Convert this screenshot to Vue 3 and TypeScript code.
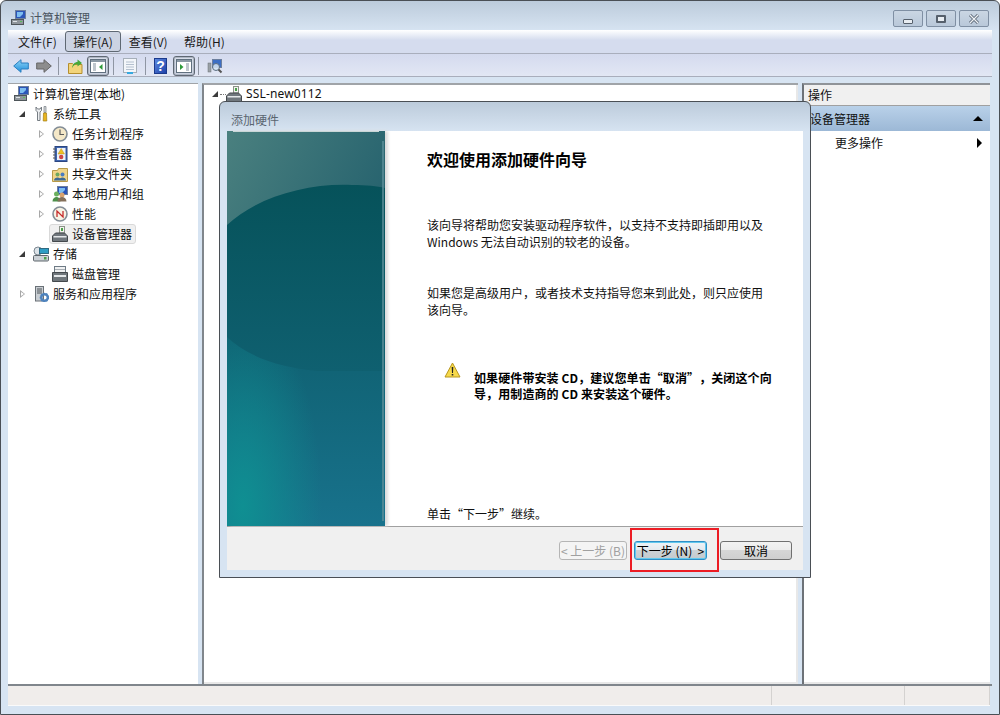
<script setup lang="ts">
interface TreeRow {
  label: string
  indent: number
  arrow?: 'open' | 'closed'
  icon: string
  selected?: boolean
}

const menus = ['文件(F)', '操作(A)', '查看(V)', '帮助(H)']

const rows: TreeRow[] = [
  { label: '计算机管理(本地)', indent: 0, icon: 'pc' },
  { label: '系统工具', indent: 1, arrow: 'open', icon: 'tools' },
  { label: '任务计划程序', indent: 2, arrow: 'closed', icon: 'clock' },
  { label: '事件查看器', indent: 2, arrow: 'closed', icon: 'event' },
  { label: '共享文件夹', indent: 2, arrow: 'closed', icon: 'share' },
  { label: '本地用户和组', indent: 2, arrow: 'closed', icon: 'users' },
  { label: '性能', indent: 2, arrow: 'closed', icon: 'perf' },
  { label: '设备管理器', indent: 2, icon: 'device', selected: true },
  { label: '存储', indent: 1, arrow: 'open', icon: 'storage' },
  { label: '磁盘管理', indent: 2, icon: 'disk' },
  { label: '服务和应用程序', indent: 1, arrow: 'closed', icon: 'service' },
]
</script>

<template>
  <div class="win">
    <header class="titlebar">
      <svg class="ico" viewBox="0 0 16 16"><rect x="5.500" y=".5" width="10" height="8" fill="#2b55b8" stroke="#6c7f9e"/><path d="M7 2h6v2l-3 3H7z" fill="#7dbdf0"/><rect x="1.500" y="9.500" width="12" height="5" fill="#8f969c" stroke="#4e5559"/><rect x="3" y="11" width="4" height="1" fill="#dfe3e6"/><rect x="10" y="11" width="2" height="1" fill="#58c058"/></svg>
      <span class="title-text">计算机管理</span>
      <div class="caption">
        <span class="cap-btn"><i class="cap-min"></i></span>
        <span class="cap-btn"><i class="cap-max"></i></span>
        <span class="cap-btn">
          <svg viewBox="0 0 12 10" width="12" height="10"><path d="M2 1l8 8M10 1l-8 8" stroke="#5a6675" stroke-width="3" fill="none"/><path d="M2 1l8 8M10 1l-8 8" stroke="#f0f3f6" stroke-width="1.200" fill="none"/></svg>
        </span>
      </div>
    </header>

    <nav class="menubar">
      <span v-for="m in menus" :key="m" class="menu" :class="{ 'menu-on': m === '操作(A)' }">{{ m }}</span>
    </nav>

    <div class="toolbar">
      <svg class="t-back" width="16" height="14" viewBox="0 0 16 14"><defs><linearGradient id="backFill" x1="0" y1="0" x2="0" y2="1"><stop offset="0" stop-color="#8fd4f6"/><stop offset="1" stop-color="#1f8fdc"/></linearGradient></defs><path d="M.7 7L8 .7V4h7.300v6H8v3.300z" fill="url(#backFill)" stroke="#2a7fc0"/></svg>
      <svg class="t-fwd" width="16" height="14" viewBox="0 0 16 14"><path d="M15.300 7L8 .7V4H.7v6H8v3.300z" fill="#8d8d8d" stroke="#666"/></svg>
      <i class="sep s1"></i>
      <svg class="t-up" width="15" height="16" viewBox="0 0 15 16"><path d="M.5 5.500h4l1 1h8.500v9H.5z" fill="#f2d47a" stroke="#b58f2e"/><path d="M4 10c.5-4 3-6 5.500-6V1.500L14 5l-4.500 3.500V6C7.500 6 5.500 7.500 4 10z" fill="#46a83a"/></svg>
      <span class="tool-box b1">
        <svg width="16" height="14" viewBox="0 0 16 14"><rect x=".5" y=".5" width="15" height="13" fill="#fff" stroke="#60707f"/><rect x="1" y="1" width="14" height="2" fill="#8a98a4"/><path d="M3 5h3M3 7h3M3 9h3M3 11h3" stroke="#7f8d99"/><path d="M12.500 5v6l-3.500-3z" fill="#2f9a3a"/></svg>
      </span>
      <i class="sep s2"></i>
      <svg class="t-doc" width="14" height="16" viewBox="0 0 14 16"><rect x=".5" y=".5" width="13" height="14" fill="#f3f6fa" stroke="#a6afb9"/><path d="M3 4h8M3 6.500h8M3 9h8M3 11.500h8" stroke="#b4c0cf"/><rect x="4" y="14" width="6" height="2" fill="#36a9e0"/></svg>
      <i class="sep s3"></i>
      <svg class="t-help" width="13" height="16" viewBox="0 0 13 16"><defs><linearGradient id="helpFill" x1="0" y1="0" x2="1" y2="1"><stop offset="0" stop-color="#5f8be0"/><stop offset="1" stop-color="#1c3fa8"/></linearGradient></defs><rect x=".5" y=".5" width="12" height="15" fill="url(#helpFill)" stroke="#1b3a8c"/><text x="6.500" y="13" font-size="14" font-weight="700" text-anchor="middle" fill="#fff" font-family="Liberation Sans">?</text></svg>
      <span class="tool-box b2">
        <svg width="16" height="14" viewBox="0 0 16 14"><rect x=".5" y=".5" width="15" height="13" fill="#fff" stroke="#60707f"/><rect x="1" y="1" width="14" height="2" fill="#8a98a4"/><path d="M10 5h3M10 7h3M10 9h3M10 11h3" stroke="#7f8d99"/><path d="M4 5v6l3.500-3z" fill="#2f9a3a"/></svg>
      </span>
      <i class="sep s4"></i>
      <svg class="t-mag" width="16" height="16" viewBox="0 0 16 16"><rect x="5.500" y="1.500" width="9" height="8" fill="#3d6fc4" stroke="#6c7f9e"/><rect x="1" y="5" width="3" height="9" fill="#9aa1a6" stroke="#6a7176" stroke-width=".5"/><circle cx="9" cy="9" r="3.500" fill="#d7e6f4" fill-opacity=".85" stroke="#5a6d80"/><path d="M11.500 11.500l3 3" stroke="#555" stroke-width="2"/></svg>
    </div>

    <main class="panes">
      <aside class="tree">
        <div v-for="r in rows" :key="r.label" class="row" :class="`lvl-${r.indent}`">
          <span class="arrow" :class="r.arrow ? `arrow-${r.arrow}` : ''"></span>
          <span class="node" :class="{ 'node-on': r.selected }">
            <svg class="ico" viewBox="0 0 16 16">
              <template v-if="r.icon === 'pc'"><rect x="5.500" y=".5" width="10" height="8" fill="#2b55b8" stroke="#6c7f9e"/><path d="M7 2h6v2l-3 3H7z" fill="#7dbdf0"/><rect x="1.500" y="9.500" width="12" height="5" fill="#8f969c" stroke="#4e5559"/><rect x="3" y="11" width="4" height="1" fill="#dfe3e6"/><rect x="10" y="11" width="2" height="1" fill="#58c058"/></template>
              <template v-else-if="r.icon === 'tools'"><path d="M3 1v3.500L4.500 6v8.500h2.500V6l1.500-1.500V1L7 3H4.500z" fill="#eceef0" stroke="#767d83"/><path d="M11 .5h2v6h-2z" fill="#d5d9dc" stroke="#767d83" stroke-width=".7"/><path d="M10.500 7h3l.3 8h-3.600z" fill="#e8b420" stroke="#a37f14" stroke-width=".7"/></template>
              <template v-else-if="r.icon === 'clock'"><circle cx="8" cy="8" r="7" fill="#f4e8c8" stroke="#838d96" stroke-width="1.600"/><path d="M8 3.500V8.500h4" stroke="#5a5a5a" stroke-width="1.200" fill="none"/></template>
              <template v-else-if="r.icon === 'event'"><rect x="3" y=".5" width="12" height="15" fill="#3f66b0" stroke="#2c4680"/><rect x="5" y="2" width="8.500" height="12" fill="#eef1f6"/><path d="M9.200 2.500l3.300 5.500H6z" fill="#f0c020" stroke="#a8861a" stroke-width=".4"/><circle cx="9.200" cy="11" r="2.200" fill="#cf4646"/><path d="M1 3h2.500M1 6h2.500M1 9h2.500M1 12h2.500" stroke="#555"/></template>
              <template v-else-if="r.icon === 'share'"><path d="M.5 4.500h5l1-2h9v13H.5z" fill="#efd488" stroke="#b89a48"/><circle cx="5.500" cy="8.500" r="2" fill="#6ea85f"/><circle cx="10.500" cy="8.500" r="2" fill="#4a7cc0"/><path d="M2 14.500c0-4 7-4 7 0zM7 14.500c0-4 7-4 7 0z" fill="#3f6a94"/></template>
              <template v-else-if="r.icon === 'users'"><rect x="5.500" y=".5" width="10" height="8" fill="#2b55b8" stroke="#6c7f9e"/><path d="M7 2h6v2l-3 3H7z" fill="#7dbdf0"/><circle cx="4.500" cy="8" r="2.500" fill="#6cb05f"/><path d="M.5 15.500c0-6 8-6 8 0z" fill="#4d8f4a"/><circle cx="10" cy="9" r="2.500" fill="#d9a36e"/><path d="M5.500 15.500c0-6 9-6 9 0z" fill="#85705a"/></template>
              <template v-else-if="r.icon === 'perf'"><circle cx="8" cy="8" r="7" fill="#f7f3e4" stroke="#838d96" stroke-width="1.600"/><path d="M5 11V5l6 6V5" stroke="#c52a2a" stroke-width="1.300" fill="none"/></template>
              <template v-else-if="r.icon === 'device'"><rect x="7.500" y=".5" width="5" height="6.500" fill="#f2f3ee" stroke="#8b9288"/><rect x="9" y="2" width="2" height="3" fill="#4aa04a"/><path d="M3.500 7h9l3 3v5.500H.5V10z" fill="#70777d" stroke="#44494d"/><rect x="1.500" y="10" width="13" height="1.500" fill="#e4e7e9"/></template>
              <template v-else-if="r.icon === 'storage'"><circle cx="5" cy="5" r="4" fill="#dde3e8" stroke="#7c8791"/><rect x="6.500" y="2.500" width="9" height="5" fill="#2e9cc4" stroke="#2f6a82"/><rect x=".5" y="9.500" width="15" height="5.500" rx="1" fill="#ccd1d6" stroke="#5f666c"/><rect x="11" y="11" width="2.500" height="2.500" fill="#4aa04a"/></template>
              <template v-else-if="r.icon === 'disk'"><rect x="2.500" y=".5" width="11" height="6" fill="#f0f1f2" stroke="#6e7a85"/><path d="M.5 6.500h15v9H.5z" fill="#6f767b" stroke="#44494d"/><rect x="2" y="9" width="12" height="2" fill="#e4e7e9"/><rect x="3" y="3" width="10" height="1" fill="#a9b0b6"/></template>
              <template v-else><rect x="2.500" y=".5" width="8" height="14.500" fill="#c9ced3" stroke="#6a7177"/><path d="M4 3h5M4 5h5M4 7h5" stroke="#4e5559"/><circle cx="11.500" cy="11.500" r="3.300" fill="none" stroke="#4f83bd" stroke-width="2.400"/><circle cx="11.500" cy="11.500" r="4.200" fill="none" stroke="#4f83bd" stroke-width="1.200" stroke-dasharray="1.500 1.500"/></template>
            </svg>
            <span class="node-text">{{ r.label }}</span>
          </span>
        </div>
      </aside>

      <section class="center">
        <div class="center-row">
          <span class="arrow arrow-open"></span>
          <i class="dots"></i>
          <svg class="ico" viewBox="0 0 16 16"><rect x="7.500" y=".5" width="5" height="6.500" fill="#f2f3ee" stroke="#8b9288"/><rect x="9" y="2" width="2" height="3" fill="#4aa04a"/><path d="M3.500 7h9l3 3v5.500H.5V10z" fill="#70777d" stroke="#44494d"/><rect x="1.500" y="10" width="13" height="1.500" fill="#e4e7e9"/></svg>
          <span class="host">SSL-new0112</span>
        </div>
      </section>

      <aside class="actions">
        <div class="act-head">操作</div>
        <div class="act-group">设备管理器<i class="tri-up"></i></div>
        <div class="act-item">更多操作<i class="tri-right"></i></div>
      </aside>
    </main>

    <footer class="statusbar">
      <span class="st st-a"></span>
      <span class="st st-b"></span>
      <span class="st st-c"></span>
    </footer>

    <div class="dialog">
      <div class="dlg-title">添加硬件</div>
      <div class="dlg-body">
        <div class="side">
          <svg class="side-art" viewBox="0 0 158 395" preserveAspectRatio="none">
            <defs>
              <linearGradient id="sideBg" x1="0" y1="0" x2="0" y2="1">
                <stop offset="0.500" stop-color="#0f6070"/>
                <stop offset="1" stop-color="#18728c"/>
              </linearGradient>
              <radialGradient id="sideGlow" cx="0.100" cy="0.950" r="0.500">
                <stop offset="0" stop-color="#0f8f92"/>
                <stop offset="1" stop-color="#0f8f92" stop-opacity="0"/>
              </radialGradient>
              <linearGradient id="sideTop" x1="0" y1="0" x2="1" y2="0.400">
                <stop offset="0" stop-color="#4a807f"/>
                <stop offset="1" stop-color="#28646f"/>
              </linearGradient>
              <linearGradient id="sideOval" x1="0" y1="0" x2="0" y2="1">
                <stop offset="0" stop-color="#06525a"/>
                <stop offset="1" stop-color="#0f6070"/>
              </linearGradient>
            </defs>
            <rect width="158" height="395" fill="url(#sideBg)"/>
            <rect width="158" height="395" fill="url(#sideGlow)"/>
            <path d="M0 0h158v130H0z" fill="url(#sideTop)"/>
            <path d="M0 94C30 66 80 52 125 54c15 0 25 1 33 3V240H90C50 236 20 225 0 206z" fill="url(#sideOval)"/>
            <path d="M6 .5h146" stroke="#c9d6d6"/>
            <path d="M156 10V390" stroke="#5d8f9a" stroke-width="1.500"/>
          </svg>
        </div>
        <div class="content">
          <h1 class="dlg-h">欢迎使用添加硬件向导</h1>
          <p class="p1">该向导将帮助您安装驱动程序软件，以支持不支持即插即用以及<br>Windows 无法自动识别的较老的设备。</p>
          <p class="p2">如果您是高级用户，或者技术支持指导您来到此处，则只应使用<br>该向导。</p>
          <div class="warn">
            <svg class="warn-ico" width="17" height="16" viewBox="0 0 17 16"><path d="M8.500 1L16 15H1z" fill="#f6d94a" stroke="#b8961e" stroke-linejoin="round"/><path d="M7.700 5h1.600l-.3 6H8zM7.700 12h1.600v1.600H7.700z" fill="#222"/></svg>
            <p class="warn-text">如果硬件带安装 CD，建议您单击“取消”，关闭这个向<br>导，用制造商的 CD 来安装这个硬件。</p>
          </div>
          <p class="cont">单击“下一步”继续。</p>
        </div>
      </div>
      <div class="dlg-foot">
        <button class="btn btn-prev" disabled>&lt; 上一步 (B)</button>
        <span class="mark">
          <button class="btn btn-next">下一步 (N) &nbsp;&gt;</button>
        </span>
        <button class="btn btn-cancel">取消</button>
      </div>
    </div>
  </div>
</template>

<style>
html,
body {
  margin: 0;
  background: #fff;
}
</style>

<style scoped>
.win {
  --ui: 'Noto Sans CJK SC', 'Liberation Sans', sans-serif;
  position: relative;
  box-sizing: border-box;
  width: 1000px;
  height: 715px;
  display: flex;
  flex-direction: column;
  padding: 0 7px 8px;
  border: 1px solid #4a4f55;
  border-radius: 6px 6px 0 0;
  background: linear-gradient(#bccbdb 0, #d7e4f2 30px);
  font: 12px/20px var(--ui);
  color: #111;
  overflow: hidden;
  text-spacing-trim: space-all;
}

.ico {
  width: 16px;
  height: 16px;
  flex-shrink: 0;
}

.titlebar {
  box-sizing: border-box;
  height: 29px;
  display: flex;
  align-items: center;
  gap: 4px;
  padding: 5px 3px 0 2px;
}

.title-text {
  color: #4a5560;
}

.caption {
  margin-left: auto;
  align-self: flex-start;
  margin-top: 4px;
  display: flex;
  gap: 3px;
}

.cap-btn {
  box-sizing: border-box;
  width: 30px;
  height: 17px;
  display: flex;
  align-items: center;
  justify-content: center;
  border: 1px solid #7f8fa3;
  border-radius: 2px;
  background: linear-gradient(#cad6e3, #b9c8d9);
}

.cap-min {
  width: 8px;
  height: 3px;
  margin-top: 5px;
  background: #e8edf2;
  border: 1px solid #56606c;
  border-radius: 1px;
}

.cap-max {
  width: 6px;
  height: 4px;
  border: 2px solid #56606c;
  background: #e8edf2;
  border-radius: 1px;
}

.menubar {
  box-sizing: border-box;
  height: 24px;
  display: flex;
  align-items: center;
  padding-left: 2px;
  background: linear-gradient(#fff 0, #d5dcee 10px);
  border-bottom: 1px solid #a9aebc;
}

.menu {
  width: 56px;
  height: 21px;
  line-height: 19px;
  padding-left: 7px;
  box-sizing: border-box;
  color: #1a1a1a;
  margin-right: -0.7px;
  border: 1px solid transparent;
  white-space: nowrap;
}

.menu-on {
  border-color: #5f6873;
  border-radius: 3px;
  background: #ccd3e2;
}

.toolbar {
  box-sizing: border-box;
  height: 23px;
  display: flex;
  align-items: center;
  padding: 1px 0 0 5px;
  background: linear-gradient(#d4daee, #e2e7f4);
  border-bottom: 1px solid #a9aebc;
}

.toolbar svg {
  flex-shrink: 0;
}

.t-fwd {
  margin-left: 7px;
}

.t-up {
  margin-left: 9px;
}

.t-doc {
  margin-left: 9px;
}

.t-help {
  margin-left: 8px;
}

.t-mag {
  margin-left: 8px;
}

.tool-box {
  width: 22px;
  height: 20px;
  display: flex;
  align-items: center;
  justify-content: center;
  box-sizing: border-box;
  border: 1px solid #5f6873;
  border-radius: 3px;
  background: linear-gradient(#d9dfe9, #c9d0de);
  box-shadow: inset 0 0 0 1px #aeb6c4;
}

.b1 {
  margin-left: 4px;
}

.b2 {
  margin-left: 6px;
}

.sep {
  width: 1px;
  height: 18px;
  background: #8f96a3;
}

.s1 {
  margin-left: 6px;
}

.s2 {
  margin-left: 4px;
}

.s3 {
  margin-left: 8px;
}

.s4 {
  margin-left: 3px;
}

.panes {
  flex: 1;
  min-height: 0;
  display: grid;
  grid-template-columns: 190px 1fr 190px;
  column-gap: 4px;
  padding-top: 6px;
  border-bottom: 2px solid #80868c;
}

.tree {
  background: #fff;
  border-top: 1px solid #a0a4a8;
}

.row {
  height: 20px;
  display: flex;
  align-items: center;
}

.lvl-0 {
  padding-left: 2px;
}

.lvl-1 {
  padding-left: 9px;
}

.lvl-2 {
  padding-left: 28px;
}

.lvl-0 .arrow {
  display: none;
}

.arrow {
  width: 8px;
  height: 8px;
  margin-right: 5px;
  flex-shrink: 0;
  position: relative;
}

.arrow-open::after {
  content: '';
  position: absolute;
  right: 0;
  bottom: 1px;
  border-style: solid;
  border-width: 0 0 6px 6px;
  border-color: transparent transparent #3b3b3b transparent;
}

.arrow-closed::after {
  content: '';
  position: absolute;
  left: 3px;
  top: 0;
  border-style: solid;
  border-width: 4px 0 4px 5px;
  border-color: transparent transparent transparent #a7a7a7;
}

.arrow-closed::before {
  content: '';
  position: absolute;
  left: 4px;
  top: 1.500px;
  z-index: 1;
  border-style: solid;
  border-width: 2.500px 0 2.500px 3px;
  border-color: transparent transparent transparent #fff;
}

.node {
  display: flex;
  align-items: center;
  gap: 4px;
  height: 20px;
  padding: 0 3px 0 2px;
  border: 1px solid transparent;
  box-sizing: border-box;
}

.node-on {
  background: #f0f0f0;
  border-color: #d9d9d9;
  border-radius: 3px;
}

.node-text {
  white-space: nowrap;
}

.center {
  background: #fff;
  border-left: 2px solid #80868c;
  border-top: 2px solid #a0a4a8;
  box-shadow: inset -2px -2px 0 #e8e8e8;
}

.center-row {
  display: flex;
  align-items: center;
  height: 17px;
  padding-left: 6px;
}

.center-row .arrow {
  margin-right: 2px;
}

.dots {
  width: 6px;
  height: 0;
  margin-top: 2px;
  border-top: 1px dotted #777;
}

.host {
  margin-left: 4px;
  letter-spacing: 0.15px;
  font-family: 'Noto Sans', 'Liberation Sans', sans-serif;
}

.actions {
  background: #fff;
  border-left: 2px solid #6d7278;
  border-top: 2px solid #8f9398;
  box-shadow: inset 0 -2px 0 #e8e8e8;
  margin-right: 2px;
}

.act-head {
  box-sizing: border-box;
  height: 21px;
  line-height: 20px;
  padding-left: 4px;
  background: #f0f0f0;
  border-bottom: 1px solid #a0a0a0;
}

.act-group {
  height: 25px;
  line-height: 25px;
  padding: 0 7px 0 6px;
  background: linear-gradient(#b9d1e9, #9cb8d6);
  display: flex;
  align-items: center;
  justify-content: space-between;
}

.act-item {
  height: 24px;
  line-height: 24px;
  padding: 0 8px 0 31px;
  display: flex;
  align-items: center;
  justify-content: space-between;
}

.tri-up {
  border-style: solid;
  border-width: 0 5px 5px;
  border-color: transparent transparent #000;
}

.tri-right {
  border-style: solid;
  border-width: 5px 0 5px 5px;
  border-color: transparent transparent transparent #000;
}

.statusbar {
  box-sizing: border-box;
  height: 20px;
  margin-right: 2px;
  display: flex;
  background: #f0edeb;
  border-bottom: 1px solid #fafafa;
}

.st {
  border-right: 1px solid #d4d2d0;
}

.st-a {
  width: 763px;
}

.st-b {
  width: 132px;
}

.st-c {
  flex: 1;
}

.dialog {
  position: absolute;
  left: 218px;
  top: 100px;
  width: 592px;
  height: 477px;
  box-sizing: border-box;
  display: flex;
  flex-direction: column;
  padding: 0 7px 7px;
  border: 1px solid #4a4f55;
  border-radius: 6px 6px 0 0;
  background: linear-gradient(#bccbdb 0, #d7e4f2 30px);
}

.dlg-title {
  height: 29px;
  flex-shrink: 0;
  line-height: 35px;
  padding-left: 4px;
  color: #5a6570;
}

.dlg-body {
  flex: 1;
  min-height: 0;
  display: flex;
  background: #fff;
  border-bottom: 1px solid #a0a0a0;
}

.side {
  width: 158px;
  flex-shrink: 0;
  box-shadow: 3px 0 3px #dcdcdc;
}

.side-art {
  display: block;
  width: 100%;
  height: 100%;
}

.content {
  flex: 1;
  display: flex;
  flex-direction: column;
  padding-left: 42px;
  color: #111;
}

.dlg-h {
  margin: 17px 0 0;
  font-size: 16px;
  line-height: 22px;
  font-weight: 700;
  color: #000;
}

.content p {
  margin: 0;
  line-height: 17px;
}

.p1 {
  padding-top: 46px;
}

.p2 {
  padding-top: 34px;
}

.warn {
  display: flex;
  padding-top: 44px;
  padding-left: 17px;
}

.warn-ico {
  flex-shrink: 0;
  margin-right: 13px;
}

.content .warn-text {
  font-weight: 700;
  padding-top: 8px;
  line-height: 16px;
  letter-spacing: 0.1px;
  color: #000;
}

.content .cont {
  margin-top: auto;
  padding-bottom: 4px;
}

.dlg-foot {
  box-sizing: border-box;
  height: 43px;
  flex-shrink: 0;
  display: flex;
  align-items: center;
  justify-content: flex-end;
  padding: 4px 11px 0 0;
  background: #f0f0f0;
}

.btn {
  height: 19px;
  padding: 0;
  box-sizing: border-box;
  font: 12px/16px var(--ui);
  color: #000;
  border: 1px solid #707070;
  border-radius: 3px;
  background: linear-gradient(#f2f2f2 0, #ebebeb 50%, #d6d6d6 50%, #cfcfcf);
}

.btn-prev {
  width: 68px;
  color: #a0a0a0;
  border-color: #b5b5b5;
  background: #f4f4f4;
}

.mark {
  position: relative;
  margin-left: 7px;
  margin-right: 13px;
  display: flex;
}

.mark::after {
  content: '';
  position: absolute;
  left: -4px;
  right: -12px;
  top: -13px;
  bottom: -12px;
  border: 2px solid #ec1c24;
}

.btn-next {
  width: 73px;
  border-color: #2f8fc6;
  box-shadow: inset 0 0 0 1px #62c8ee;
  background: linear-gradient(#eef3f7 0, #e3e9ee 50%, #ccd2d6 50%, #c4cace);
}

.btn-cancel {
  width: 72px;
}
</style>
